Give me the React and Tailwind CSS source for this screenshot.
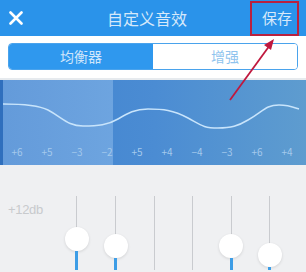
import React from 'react';

const labels = ['+6', '+5', '−3', '−2', '+5', '+4', '−4', '−3', '+6', '+4'];

// knob offset from top of the track (null = knob out of view)
const sliders = [43, 50, null, null, 50, 59];

function CloseIcon() {
  return (
    <svg width="14" height="14" viewBox="0 0 14 14">
      <path d="M1.5 1.5 L12.5 12.5 M12.5 1.5 L1.5 12.5" stroke="#fff" strokeWidth="2.6" strokeLinecap="round" />
    </svg>
  );
}

function Curve() {
  return (
    <svg className="absolute inset-0" width="306" height="85" viewBox="0 0 306 85">
      <path
        d="M0 24 C20 24 35 25 45 30 C60 38 65 46 80 46 C95 46 105 45 115 39 C125 33 132 29 145 29 C160 29 170 30 185 38 C198 45 200 48 215 48 C228 48 235 46 245 40 C260 32 262 25 276 25 C285 25 290 27 296 29"
        fill="none"
        stroke="#c8e4fb"
        strokeWidth="1.5"
      />
    </svg>
  );
}

function Slider({ knob }) {
  return (
    <div className="relative w-[38.6px] h-full flex justify-center">
      <div className="w-[1px] h-full bg-[#c9cbcf]" />
      {knob != null && (
        <div className="absolute inset-x-0 bottom-0 flex flex-col items-center" style={{ top: knob - 12 }}>
          <div className="w-[24px] h-[24px] shrink-0 rounded-full bg-white shadow-[0_1px_3px_rgba(0,0,0,0.12)]" />
          <div className="w-[3px] flex-1 bg-[#3d9de6]" />
        </div>
      )}
    </div>
  );
}

export default function App() {
  return (
    <div
      className="relative w-[306px] h-[272px] overflow-hidden bg-[#eff0f2]"
      style={{ fontFamily: '"Noto Sans CJK SC", "Noto Sans", sans-serif' }}
    >
      {/* header */}
      <div className="h-[36px] bg-[#2a93ea] flex items-center px-[9px]">
        <CloseIcon />
        <div className="flex-1 text-center text-[16px] text-[#d6e9fa] pl-[18px]">自定义音效</div>
        <div className="w-[48px] text-center text-[15px] text-[#d6e9fa] mr-[-4px]">保存</div>
      </div>

      {/* tabs */}
      <div className="bg-white h-[44px] pt-[7px] px-[8px] border-b-2 border-[#e6eaee]">
        <div className="flex h-[27px] rounded-[4px] border border-[#4aa3ec] overflow-hidden">
          <div className="w-1/2 bg-[#2f98ee] flex items-center justify-center text-[14px] text-[#cfe6fb]">均衡器</div>
          <div className="w-1/2 bg-white flex items-center justify-center text-[14px] text-[#8fc4ee]">增强</div>
        </div>
      </div>

      {/* eq graph */}
      <div className="relative h-[85px] bg-gradient-to-r from-[#3f82cf] via-[#4b8cd3] to-[#5e9ccf] border-l-[3px] border-[#2f6fbd]">
        <div className="absolute left-0 top-0 bottom-0 w-[110px] bg-gradient-to-r from-[#6a9fdc] to-[#74a9e2] opacity-85" />
        <Curve />
        <div className="absolute left-[-1px] right-0 bottom-[6px] flex">
          {labels.map((l, i) => (
            <div key={i} className="w-[30px] text-center text-[10px] text-[#a4c9ec]">
              {l}
            </div>
          ))}
        </div>
      </div>

      {/* sliders */}
      <div className="flex h-[105px]">
        <div className="w-[57.7px] pl-[8px] pt-[35px] text-[13px] text-[#c8cacd] tracking-tight" style={{ fontFamily: '"Liberation Sans", sans-serif' }}>
          +12db
        </div>
        <div className="flex pt-[31px]">
          {sliders.map((k, i) => (
            <Slider key={i} knob={k} />
          ))}
        </div>
      </div>

      {/* annotation overlay */}
      <div className="absolute left-[250px] top-[1px] w-[49px] h-[35px] border-2 border-[#b8213f]" />
      <svg className="absolute inset-0 pointer-events-none" width="306" height="272">
        <line x1="230" y1="100" x2="270" y2="45" stroke="#c0183e" strokeWidth="1.8" />
        <polygon points="274,39 264,45 271,50" fill="#c0183e" />
      </svg>
    </div>
  );
}
